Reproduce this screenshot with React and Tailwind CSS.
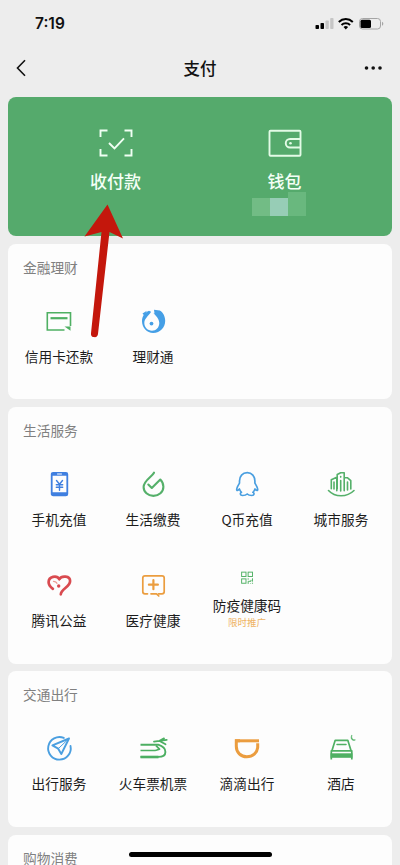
import React from "react";

const GREEN = "#4fb063";
const BLUE = "#4a9fe0";
const ORANGE = "#eb9d3f";

function Icon({ children, color = GREEN, width = 2 }) {
  return (
    <svg
      viewBox="0 0 32 32"
      className="block h-8 w-8"
      fill="none"
      stroke={color}
      strokeWidth={width}
      strokeLinecap="round"
      strokeLinejoin="round"
    >
      {children}
    </svg>
  );
}

const CreditCard = () => (
  <Icon width={1.6}>
    <path d="M21.5 25H4.3V7.8h23.2V21" strokeLinecap="butt" strokeLinejoin="miter" />
    <path d="M7.5 13.2h17" strokeWidth="2.2" strokeLinecap="butt" />
    <path d="M21.5 21.5h6v4.3z" fill={GREEN} stroke="none" />
  </Icon>
);

const Wealth = () => (
  <Icon color="none">
    <path
      d="M12 5.8C7.6 7.6 5 11.4 5 16.2c0 6.400 4.900 11.800 11.200 11.800 7.200 0 12-5.600 12-12.200 0-4.300-2-8.300-5.400-10.300L17 4.700l.5 3.800z"
      fill="#459fe6"
    />
    <path d="M15 4.500c.5 4.500 7.300 7.600 7.300 13.500 0 4.500-3.300 7.700-7.400 7.700S7.300 22.400 7.300 18c0-5.500 6.700-8.500 7.700-13.500z" fill="#fdfdfd" />
    <circle cx="14.500" cy="18.600" r="1.900" fill="#459fe6" />
    <path d="M5.500 8.500l4.300-2.800-2.300 5z" fill="#459fe6" />
  </Icon>
);

const Phone = () => (
  <Icon color="#3f7fe0" width={1.8}>
    <rect x="8.700" y="4.800" width="15.600" height="22.600" rx="1.500" />
    <path d="M8.700 6.300h15.600M8.700 25.800h15.600" strokeWidth="3" strokeLinecap="butt" />
    <path d="M14.500 6h4" stroke="#fff" strokeWidth="1" />
    <path d="M13.500 12.500l3 3.700 3-3.700M13.300 16.700h6.400M13.300 19.200h6.400M16.500 16.200v6" strokeWidth="1.400" />
  </Icon>
);

const Drop = () => (
  <Icon color="#55b06a" width={2.1}>
    <path d="M17 4.700C15 8.700 6.600 12.500 6.600 19c0 5 4.300 8.900 9.800 8.900s10-3.900 10-9.100c0-3-1.300-5.400-3.100-7.200L14.800 20l-3.500-3.500" />
  </Icon>
);

const Penguin = () => (
  <Icon color={BLUE} width={1.700}>
    <path d="M16.200 4.700c-4.800 0-7.700 3.600-7.700 8.200v2.200c-1.400 2.300-2.800 4.600-2.800 6.400 0 1.400 1.100 1.400 2.700-.5.500 1.400 1.200 2.500 2.100 3.300-1.700.8-1.600 3.200 1 3.200 1.900 0 3.600-.4 4.700-1.500 1.100 1.100 2.800 1.500 4.700 1.500 2.600 0 2.700-2.400 1-3.200.9-.8 1.600-1.900 2.100-3.300 1.600 1.900 2.700 1.900 2.700.5 0-1.800-1.400-4.100-2.800-6.400v-2.200c0-4.600-2.900-8.200-7.700-8.200z" />
  </Icon>
);

const City = () => (
  <Icon color="#55b06a" width={1.600}>
    <path d="M3.500 22.500c6.500 7 18.500 7 25.500 0" />
    <path d="M6.300 20.800v-9l5.500-2.600v13.600M12.200 21V6.500l3.500-1.700h3.500v18M19.500 9.700h2.800l3.500 3v8.200" />
    <path d="M9 14v7M15.700 12.500V23M22.500 14v8M15.700 8.500v.6" />
  </Icon>
);

const Heart = () => (
  <Icon color="#d94b50" width={2.700}>
    <path d="M16.300 10C13.800 6 5.600 7.200 5.600 13.200c0 3 2 4.900 4.300 6.600" />
    <path d="M16.300 10c2.300-3.600 10.800-3.400 10.800 2 0 6.200-9 7.500-9.300 13.300" />
    <circle cx="15.700" cy="17" r="1.700" fill="#d94b50" stroke="none" />
    <path d="M10.500 12.300c1.800 0 3 .8 3.400 2.100" stroke="#ec9a92" strokeWidth="1.300" />
  </Icon>
);

const Medical = () => (
  <Icon color={ORANGE} width={1.700}>
    <path d="M10.500 24.800H8c-1.300 0-2.200-.8-2.200-2V9c0-1.300.9-2.200 2.200-2.200h17c1.300 0 2.200.9 2.200 2.200v13.800c0 1.200-.9 2-2.200 2h-3.500" />
    <path d="M14 24.800h5.500l2.300 2.200" />
    <path d="M16.400 11.200v9M11.900 15.700h9" strokeWidth="2.200" />
  </Icon>
);

const QrCode = () => (
  <Icon width={1.800}>
    <g strokeLinecap="butt" strokeLinejoin="miter">
      <rect x="5.900" y="5.900" width="8.200" height="8.200" />
      <rect x="18.100" y="5.900" width="8.200" height="8.200" />
      <rect x="5.900" y="18.600" width="8.200" height="8.200" />
      <path d="M18.200 17.500v2.600M18.200 28v-4.800h5.300v-2.800M26.300 17.500v6.300M25.200 26.800h2.200M22.500 26.800v1" />
    </g>
  </Icon>
);

const Navigate = () => (
  <Icon color={BLUE} width={1.900}>
    <path d="M20.800 5.900A11.300 11.300 0 1 0 27.500 14" />
    <path d="M26 6.500L18.300 22l-3.100-5.300-5.800-3.300z" width="1.500" />
    <path d="M26 6.500L15.200 16.700" strokeWidth="1" />
  </Icon>
);

const Train = () => (
  <Icon color="#4caf62" width={1.900}>
    <path d="M3.500 12.700h17.700c4.200 1.400 7.200 4 7.200 7.200 0 3.300-2.700 5-7.200 5H3.500" strokeLinecap="butt" />
    <path d="M3.500 18.500h14.500c2 0 2.800-1 4.500-1.300l-3.500-3.500" strokeWidth="1.700" strokeLinecap="butt" />
    <path d="M3.500 25h18" strokeWidth="2.600" strokeLinecap="butt" />
    <path d="M17 9.700l12.700-1.800M22.500 8.700l4.500-2.300M23 9.200l5.500 3" strokeWidth="1.800" />
  </Icon>
);

const Didi = () => (
  <Icon color={ORANGE} width={3}>
    <path d="M9 8.800H5.300v5.500c0 6.200 4.500 10.500 10.500 10.500 6.100 0 10.300-3.900 10.900-9.300v-4.300" strokeLinecap="butt" strokeLinejoin="miter" />
    <path d="M4 8.800h24" strokeLinecap="butt" />
  </Icon>
);

const Hotel = () => (
  <Icon width={1.700}>
    <path d="M7 18.500L10.200 8.300h12.600L26 18.500" />
    <path d="M12 12.500h9" strokeWidth="1.500" />
    <path d="M6.300 27.500v-8.700h20.500v8.700" strokeLinecap="butt" />
    <rect x="5.500" y="21.300" width="22" height="4.500" fill={GREEN} stroke="none" />
    <path d="M26.700 3.400c-.6 2.800.8 4.500 3.700 4.500-2.800 1.700-5.600-1.400-3.700-4.500z" fill={GREEN} strokeWidth="0.600" />
  </Icon>
);

function Section({ title, items = [], className }) {
  return (
    <section className={`shrink-0 rounded-lg bg-[#fdfdfd] px-1 pt-[13px] ${className}`}>
      <h2 className="h-5 pl-[11px] text-[13.700px] leading-5 text-[#808080]">{title}</h2>
      <div className="mt-7 grid grid-cols-4 gap-y-10">
        {items.map(([label, Glyph, note]) => (
          <div key={label} className="flex h-[61px] flex-col items-center whitespace-nowrap">
            <Glyph />
            <span className="mt-[9px] text-[13.700px] leading-5 text-[#1c1c1c]">{label}</span>
            {note && <span className="text-[9.500px] leading-[15px] text-[#efb465]">{note}</span>}
          </div>
        ))}
      </div>
    </section>
  );
}

function StatusBar() {
  return (
    <div className="flex h-12 shrink-0 items-center justify-between pl-[35px] pr-4">
      <span className="font-['Inter','Liberation_Sans',sans-serif] text-[15.500px] font-semibold text-[#111]">7:19</span>
      <div className="flex items-center">
        <svg viewBox="0 0 70 14" className="h-[14px] w-[70px]">
          <rect x="1.500" y="8" width="3.500" height="4" rx="0.800" fill="#000" />
          <rect x="6.500" y="6" width="3.500" height="6" rx="0.800" fill="#000" />
          <rect x="11.500" y="3.500" width="3.300" height="8.500" rx="0.800" fill="#c6c6c6" />
          <rect x="16.200" y="1" width="3.300" height="11" rx="0.800" fill="#c6c6c6" />
          <g fill="none" stroke="#000" strokeWidth="2">
            <path d="M24.800 4.900a10.200 10.200 0 0 1 14 0" />
            <path d="M27.500 7.900a6.300 6.300 0 0 1 8.600 0" />
          </g>
          <path d="M29.500 10a3.300 3.300 0 0 1 4.600 0l-2.300 2.400z" fill="#000" />
          <rect x="45.500" y="1.500" width="21" height="10.500" rx="3" fill="none" stroke="#a5a5a5" />
          <rect x="46.500" y="2.700" width="10.500" height="8.200" rx="1.500" fill="#000" />
          <path d="M68 4.800c1.800.7 1.800 3.300 0 4z" fill="#a5a5a5" />
        </svg>
      </div>
    </div>
  );
}

function NavBar() {
  return (
    <div className="flex h-10 shrink-0 items-center justify-between px-4">
      <svg viewBox="0 0 20 20" className="h-5 w-5" fill="none" stroke="#111" strokeWidth="1.600">
        <path d="M9 2.300L1.500 10 9 17.700" />
      </svg>
      <h1 className="text-[16.500px] font-medium text-[#111]">支付</h1>
      <svg viewBox="0 0 20 20" className="h-5 w-5" fill="#111">
        <circle cx="2.500" cy="10" r="1.800" />
        <circle cx="9.200" cy="10" r="1.800" />
        <circle cx="16" cy="10" r="1.800" />
      </svg>
    </div>
  );
}

function PayPanel() {
  return (
    <section className="mt-[9px] flex h-[139px] shrink-0 rounded-lg bg-[#55aa6c] px-[23px] text-[17px] font-medium text-[#f4fff6]">
      <div className="flex w-[169px] flex-col items-center pt-[30px]">
        <svg viewBox="0 0 36 32" className="h-8 w-9" fill="none" stroke="#f0fff3" strokeWidth="1.900">
          <path d="M2.500 10V3.500h7M26.500 3.500h7V10M33.500 22v6.500h-7M9.500 28.500h-7V22" />
          <path d="M11 16l5.500 5.500L26 11.300" />
        </svg>
        <span className="mt-[10px] leading-6">收付款</span>
      </div>
      <div className="relative flex w-[169px] flex-col items-center pt-[30px]">
        <svg viewBox="0 0 36 32" className="h-8 w-9" fill="none" stroke="#e3fbe6" strokeWidth="1.900">
          <rect x="2.500" y="3.700" width="31" height="25" rx="1" />
          <path d="M33.500 12H23a4.200 4.200 0 0 0 0 8.500h10.500" />
          <circle cx="23.500" cy="16.200" r="1.300" fill="#e3fbe6" stroke="none" />
        </svg>
        <span className="mt-[10px] leading-6">钱包</span>
        <div className="absolute left-[52px] top-[95px] flex items-end">
          <i className="h-[18px] w-[18px] bg-[#72bc85]" />
          <i className="h-[18px] w-[18px] bg-[#97cdb6]" />
          <i className="h-6 w-[18px] bg-[#69b87e]" />
        </div>
      </div>
    </section>
  );
}

export default function App() {
  return (
    <main className="relative flex h-[865px] w-[400px] flex-col overflow-hidden bg-[#ededed] font-['Noto_Sans_CJK_SC',sans-serif]">
      <StatusBar />
      <NavBar />
      <div className="flex flex-col px-2">
        <PayPanel />
        <Section
          title="金融理财"
          className="mt-2 h-[155px]"
          items={[["信用卡还款", CreditCard], ["理财通", Wealth]]}
        />
        <Section
          title="生活服务"
          className="mt-2 h-[257px]"
          items={[
            ["手机充值", Phone],
            ["生活缴费", Drop],
            ["Q币充值", Penguin],
            ["城市服务", City],
            ["腾讯公益", Heart],
            ["医疗健康", Medical],
            ["防疫健康码", QrCode, "限时推广"],
          ]}
        />
        <Section
          title="交通出行"
          className="mt-[7px] h-[156px]"
          items={[["出行服务", Navigate], ["火车票机票", Train], ["滴滴出行", Didi], ["酒店", Hotel]]}
        />
        <Section title="购物消费" className="mt-2 h-[100px]" />
      </div>
      <svg viewBox="0 0 44 136" className="absolute left-[82px] top-[203px] h-[136px] w-11">
        <path d="M25.500 1.500L41 35.500 27.500 29 16 131a3.500 3.500 0 0 1-7-.8L19.500 29 2.500 33.500z" fill="#c4170c" />
      </svg>
      <div className="absolute bottom-[8px] left-[129px] h-[5px] w-[143px] rounded-full bg-black" />
    </main>
  );
}
